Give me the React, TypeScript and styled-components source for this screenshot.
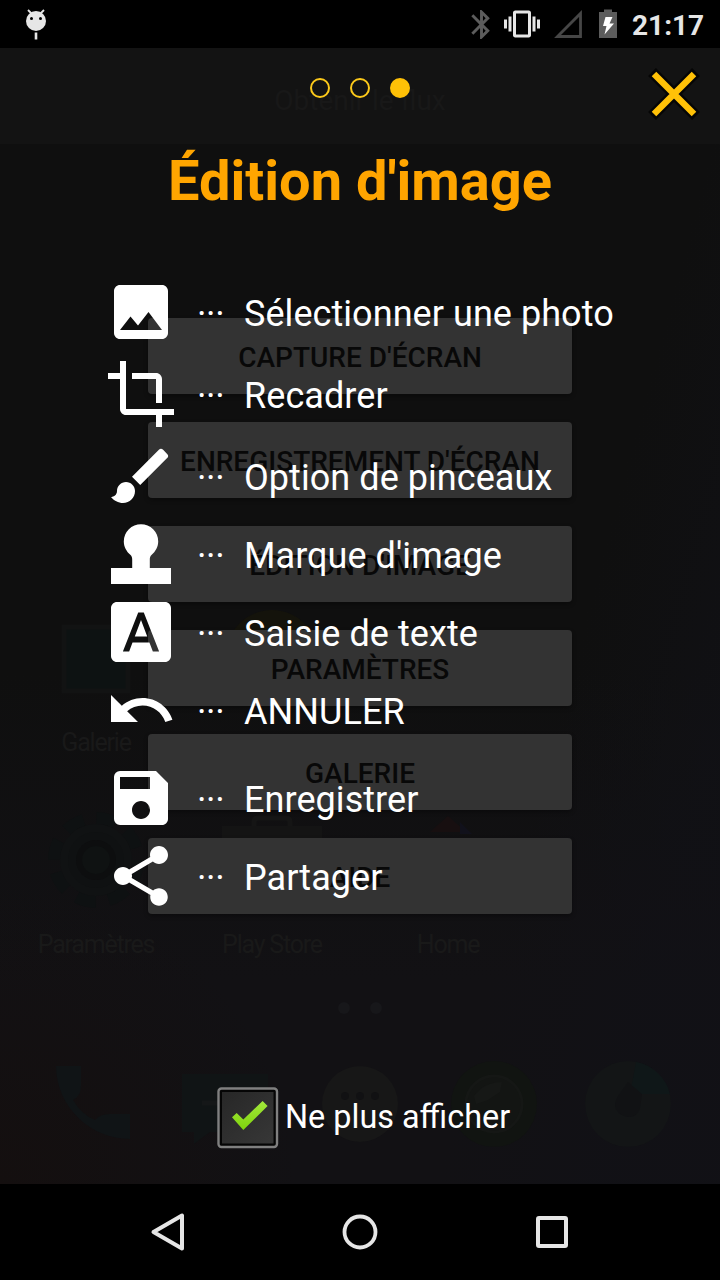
import React from "react";
import styled, { createGlobalStyle } from "styled-components";
import {
  MdBluetooth,
  MdBrush,
  MdCrop,
  MdFontDownload,
  MdImage,
  MdSave,
  MdShare,
  MdUndo,
  MdVibration,
} from "react-icons/md";

const GlobalStyle = createGlobalStyle`
  * { box-sizing: border-box; }
  body { margin: 0; background: #000; font-family: Roboto, "Liberation Sans", sans-serif; }
  svg { display: block; flex: none; }
`;

const Screen = styled.div`
  width: 720px;
  height: 1280px;
  display: grid;
  grid-template-rows: 48px 1136px 96px;
  overflow: hidden;
  background: #000;
`;

const StatusBar = styled.header`
  display: flex;
  align-items: center;
  padding: 0 16px 0 24px;
  color: #e6e6e6;
`;

const StatusIcons = styled.div`
  display: flex;
  align-items: center;
  margin-left: auto;
`;

const StatusGlyph = styled.span<{ $gap: number; $tone?: string }>`
  display: block;
  margin-right: ${(p) => p.$gap}px;
  color: ${(p) => p.$tone ?? "#e6e6e6"};
`;

const Clock = styled.time`
  width: 72px;
  padding-top: 4px;
  font-size: 28px;
  font-weight: 700;
  line-height: 34px;
  white-space: nowrap;
`;

/* Every layer of the stage shares the same grid cell. */
const Stage = styled.main`
  display: grid;
  grid-template: 1136px / 720px;
  background:
    radial-gradient(circle at 0% 100%, #140f0f 0, rgba(20, 15, 15, 0) 300px),
    linear-gradient(105deg, rgba(17, 17, 22, 0) 72%, rgba(17, 17, 22, 0.7) 88%),
    linear-gradient(#0f0f0f 0%, #0f0f0f 55%, #121114 82%, #121114 100%);
`;

const Layer = styled.section`
  grid-area: 1 / 1;
  display: flex;
  flex-direction: column;
  min-width: 0;
`;

const AppGrid = styled.div`
  display: grid;
  grid-template-columns: repeat(3, 176px);
  grid-auto-rows: 202px;
  margin: 558px 0 0 8px;
`;

const AppItem = styled.div`
  display: flex;
  flex-direction: column;
  align-items: center;
`;

const AppLabel = styled.span`
  margin-top: 18px;
  font-size: 25px;
  line-height: 30px;
  letter-spacing: -1.2px;
  color: #191919;
  white-space: nowrap;
`;

const PageMarks = styled.div`
  display: flex;
  justify-content: center;
  gap: 20px;
  margin-top: -8px;
`;

const PageMark = styled.span`
  width: 12px;
  height: 12px;
  border-radius: 50%;
  background: #17171a;
`;

const Dock = styled.div`
  display: grid;
  grid-template-columns: repeat(5, 134px);
  justify-items: center;
  margin: 46px 0 0 25px;
`;

const AppBar = styled.div`
  height: 96px;
  padding-top: 10px;
  display: flex;
  align-items: center;
  justify-content: center;
  background: #131313;
  font-size: 28px;
  line-height: 34px;
  color: #181818;
`;

const Menu = styled.div`
  display: flex;
  flex-direction: column;
  gap: 28px;
  width: 424px;
  margin: 174px auto 0;
`;

const MenuButton = styled.div`
  height: 76px;
  padding-top: 2px;
  display: flex;
  align-items: center;
  justify-content: center;
  border-radius: 4px;
  background: #333;
  box-shadow: 0 2px 4px rgba(0, 0, 0, 0.35);
  font-size: 28px;
  font-weight: 500;
  color: #080808;
  white-space: nowrap;
`;

const TopRow = styled.div`
  display: grid;
  grid-template-columns: 1fr auto 1fr;
  height: 80px;
`;

const Dots = styled.div`
  grid-column: 2;
  display: flex;
  gap: 20px;
  padding-top: 30px;
`;

const Dot = styled.span<{ $active?: boolean }>`
  width: 20px;
  height: 20px;
  border: 2px solid ${(p) => (p.$active ? "#ffc107" : "#fcc91a")};
  border-radius: 50%;
  background: ${(p) => (p.$active ? "#ffc107" : "transparent")};
`;

const CloseButton = styled.div`
  justify-self: end;
  padding: 20px 20px 0 0;
`;

const Title = styled.h1`
  margin: 20px 0 0;
  height: 66px;
  font-size: 56px;
  font-weight: 700;
  line-height: 66px;
  text-align: center;
  color: #ffa500;
`;

const Legend = styled.ul`
  margin: 62px 0 0;
  padding: 0 0 0 105px;
  list-style: none;
`;

const LegendRow = styled.li<{ $gap: number }>`
  display: grid;
  grid-template-columns: 72px 67px auto;
  align-items: center;
  height: 72px;
  margin-top: ${(p) => p.$gap}px;
  color: #fff;
  font-size: 36px;
  line-height: 44px;
  white-space: nowrap;
`;

const Leader = styled.span`
  padding: 3px 0 0 20px;
  letter-spacing: -0.3px;
`;

const LegendText = styled.span`
  padding-top: 4px;
  letter-spacing: 0.06px;
`;

const Dismiss = styled.label`
  display: flex;
  align-items: center;
  margin: 174px 0 0 216px;
  color: #fff;
  font-size: 32.4px;
  line-height: 40px;
`;

const DismissText = styled.span`
  margin: 0 0 1px 6px;
`;

const NavBar = styled.nav`
  display: grid;
  grid-template-columns: repeat(3, 192px);
  justify-content: center;
  align-items: center;
  justify-items: center;
`;

const DroidIcon = () => (
  <svg width="24" height="32" viewBox="0 0 24 32">
    <path d="M4 2l4 4M20 2l-4 4" stroke="#e6e6e6" strokeWidth="1.8" />
    <circle cx="12" cy="13" r="10" fill="#e6e6e6" />
    <circle cx="7.5" cy="10.5" r="1.5" fill="#000" />
    <circle cx="16.5" cy="10.5" r="1.5" fill="#000" />
    <path d="M12 24.500v7" stroke="#e6e6e6" strokeWidth="2.600" />
  </svg>
);

const SignalIcon = () => (
  <svg width="28" height="30" viewBox="0 0 28 30">
    <path d="M3.500 27.500L26.500 4.500V27.500Z" fill="none" stroke="#464646" strokeWidth="2.800" />
  </svg>
);

const BatteryIcon = () => (
  <svg width="20" height="30" viewBox="0 0 20 30">
    <path d="M1 3h5V0.500h8V3h5v26H1z" fill="#5c5c5c" />
    <path d="M7.500 8h7l-3 6.500h4.500L6.500 25.500l2-8.500H5z" fill="#fff" />
  </svg>
);

const CloseIcon = () => (
  <svg width="52" height="52" viewBox="0 0 52 52">
    <path d="M4 4L48 48M48 4L4 48" stroke="#050505" strokeWidth="11" />
    <path d="M6 6L46 46M46 6L6 46" stroke="#ffc107" strokeWidth="6.400" />
  </svg>
);

const StampIcon = () => (
  <svg width="72" height="72" viewBox="0 0 72 72" fill="#fff">
    <path d="M36 6.200a17.200 17.200 0 0 1 17.200 17.200c0 5.500-2.800 10-6.500 13.400-1.500 1.400-1.900 3-1.900 5V50H66v16H6V50h21.200v-8.200c0-2-.4-3.600-1.900-5-3.700-3.400-6.500-7.900-6.500-13.400A17.200 17.200 0 0 1 36 6.200z" />
  </svg>
);

const CheckboxIcon = () => (
  <svg width="63" height="63" viewBox="0 0 63 63">
    <defs>
      <linearGradient id="box" x1="0" y1="0" x2="1" y2="1">
        <stop offset="0" stopColor="#272727" />
        <stop offset="1" stopColor="#373737" />
      </linearGradient>
      <linearGradient id="tick" x1="0" y1="0" x2="0" y2="1">
        <stop offset="0" stopColor="#a2e83c" />
        <stop offset="1" stopColor="#7fd30c" />
      </linearGradient>
    </defs>
    <rect x="2.500" y="2.500" width="58.500" height="58.500" rx="3" fill="#050505" stroke="#808080" strokeWidth="2.400" />
    <rect x="6" y="6" width="51.500" height="51.500" fill="url(#box)" />
    <path d="M16 31.200L20.700 27l6.600 6.600L46.600 15l5 5L27.300 44z" fill="url(#tick)" />
  </svg>
);

const GalleryArt = () => (
  <svg width="104" height="104" viewBox="0 0 104 104">
    <rect x="20" y="21" width="64" height="64" fill="#0d1212" stroke="#121313" strokeWidth="5" />
  </svg>
);

const YellowArt = () => (
  <svg width="104" height="104" viewBox="0 0 104 104">
    <ellipse cx="52" cy="50" rx="46" ry="46" fill="#14130b" />
  </svg>
);

const GearArt = () => (
  <svg width="104" height="104" viewBox="0 0 104 104" fill="none">
    <circle cx="52" cy="52" r="42" stroke="#0e1112" strokeWidth="12" strokeDasharray="20 13" />
    <circle cx="52" cy="52" r="32" fill="#0f1112" stroke="#101213" strokeWidth="8" />
    <circle cx="52" cy="52" r="17" fill="#0f1212" stroke="#0d0e0f" strokeWidth="6" />
  </svg>
);

const BagArt = () => (
  <svg width="104" height="104" viewBox="0 0 104 104" fill="none">
    <path d="M34 20v-6q0-4 4-4h28q4 0 4 4v6" stroke="#151515" strokeWidth="5" />
    <rect x="2" y="18" width="100" height="76" fill="#141414" />
  </svg>
);

const HomeArt = () => (
  <svg width="104" height="104" viewBox="0 0 104 104">
    <path d="M34 24l18-16 18 16z" fill="#170f10" />
    <path d="M64 14l12 12H64z" fill="#11111b" />
  </svg>
);

const PhoneArt = () => (
  <svg width="88" height="88" viewBox="0 0 88 88">
    <path d="M16 6h25v20q0 10-8 14 8 14 22 20 5-6 14-6h21v25C50 79 16 46 16 6z" transform="translate(-8 0)" fill="#101416" />
  </svg>
);

const MessageArt = () => (
  <svg width="88" height="88" viewBox="0 0 88 88">
    <path d="M0 14h86v58H28L12 84V72H0z" fill="#101415" />
    <path d="M20 43h40" stroke="#151718" strokeWidth="5" />
  </svg>
);

const LauncherArt = () => (
  <svg width="88" height="88" viewBox="0 0 88 88">
    <circle cx="44" cy="44" r="38" fill="#171717" />
    <g fill="#111113">
      <circle cx="29" cy="36" r="4" />
      <circle cx="44" cy="36" r="4" />
      <circle cx="59" cy="36" r="4" />
    </g>
  </svg>
);

const BrowserArt = () => (
  <svg width="88" height="88" viewBox="0 0 88 88">
    <circle cx="44" cy="44" r="43" fill="#111411" />
    <circle cx="44" cy="44" r="28" fill="#131513" stroke="#151715" strokeWidth="3" />
    <path d="M24 36q10-14 28-14l-2 10-12 8-12 4z" fill="#161816" />
  </svg>
);

const CameraArt = () => (
  <svg width="88" height="88" viewBox="0 0 88 88">
    <circle cx="44" cy="44" r="43" fill="#131516" />
    <path d="M52 2a43 43 0 0 1 34 32H46z" fill="#0f1718" />
    <path d="M44 22L34 36q-8 14 6 20 12 4 16-8l2-14z" fill="#111214" />
  </svg>
);

const apps = [
  { label: "Galerie", art: <GalleryArt /> },
  { label: "", art: <YellowArt /> },
  { label: "", art: null },
  { label: "Paramètres", art: <GearArt /> },
  { label: "Play Store", art: <BagArt /> },
  { label: "Home", art: <HomeArt /> },
];

const menuItems = [
  "CAPTURE D'ÉCRAN",
  "ENREGISTREMENT D'ÉCRAN",
  "ÉDITION D'IMAGE",
  "PARAMÈTRES",
  "GALERIE",
  "AIDE",
];

const legend = [
  { text: "Sélectionner une photo", icon: <MdImage size={72} />, gap: 0 },
  { text: "Recadrer", icon: <MdCrop size={72} />, gap: 10 },
  { text: "Option de pinceaux", icon: <MdBrush size={72} />, gap: 10 },
  { text: "Marque d'image", icon: <StampIcon />, gap: 6 },
  { text: "Saisie de texte", icon: <MdFontDownload size={72} />, gap: 6 },
  { text: "ANNULER", icon: <MdUndo size={72} />, gap: 6 },
  { text: "Enregistrer", icon: <MdSave size={72} />, gap: 16 },
  { text: "Partager", icon: <MdShare size={72} />, gap: 6 },
];

export default function App() {
  return (
    <Screen>
      <GlobalStyle />
      <StatusBar>
        <DroidIcon />
        <StatusIcons>
          <StatusGlyph $gap={5} $tone="#5c5c5c"><MdBluetooth size={35} /></StatusGlyph>
          <StatusGlyph $gap={14}><MdVibration size={36} /></StatusGlyph>
          <StatusGlyph $gap={16}><SignalIcon /></StatusGlyph>
          <StatusGlyph $gap={14}><BatteryIcon /></StatusGlyph>
          <Clock>21:17</Clock>
        </StatusIcons>
      </StatusBar>

      <Stage>
        <Layer>
          <AppGrid>
            {apps.map((app, i) => (
              <AppItem key={i}>
                {app.art}
                <AppLabel>{app.label}</AppLabel>
              </AppItem>
            ))}
          </AppGrid>
          <PageMarks>
            <PageMark />
            <PageMark />
          </PageMarks>
          <Dock>
            <PhoneArt />
            <MessageArt />
            <LauncherArt />
            <BrowserArt />
            <CameraArt />
          </Dock>
        </Layer>

        <Layer>
          <AppBar>Obtenir le flux</AppBar>
          <Menu>
            {menuItems.map((item) => (
              <MenuButton key={item}>{item}</MenuButton>
            ))}
          </Menu>
        </Layer>

        <Layer>
          <TopRow>
            <Dots>
              <Dot />
              <Dot />
              <Dot $active />
            </Dots>
            <CloseButton><CloseIcon /></CloseButton>
          </TopRow>
          <Title>Édition d'image</Title>
          <Legend>
            {legend.map((row) => (
              <LegendRow key={row.text} $gap={row.gap}>
                {row.icon}
                <Leader>···</Leader>
                <LegendText>{row.text}</LegendText>
              </LegendRow>
            ))}
          </Legend>
          <Dismiss>
            <CheckboxIcon />
            <DismissText>Ne plus afficher</DismissText>
          </Dismiss>
        </Layer>
      </Stage>

      <NavBar>
        <svg width="40" height="40" viewBox="0 0 40 40">
          <path d="M5.500 20L34 3.500V36.500Z" fill="none" stroke="#e6e6e6" strokeWidth="4" strokeLinejoin="round" />
        </svg>
        <svg width="40" height="40" viewBox="0 0 40 40">
          <circle cx="20" cy="20" r="15.500" fill="none" stroke="#e6e6e6" strokeWidth="3.800" />
        </svg>
        <svg width="40" height="40" viewBox="0 0 40 40">
          <rect x="6" y="6" width="28" height="28" rx="1" fill="none" stroke="#e6e6e6" strokeWidth="4" />
        </svg>
      </NavBar>
    </Screen>
  );
}
